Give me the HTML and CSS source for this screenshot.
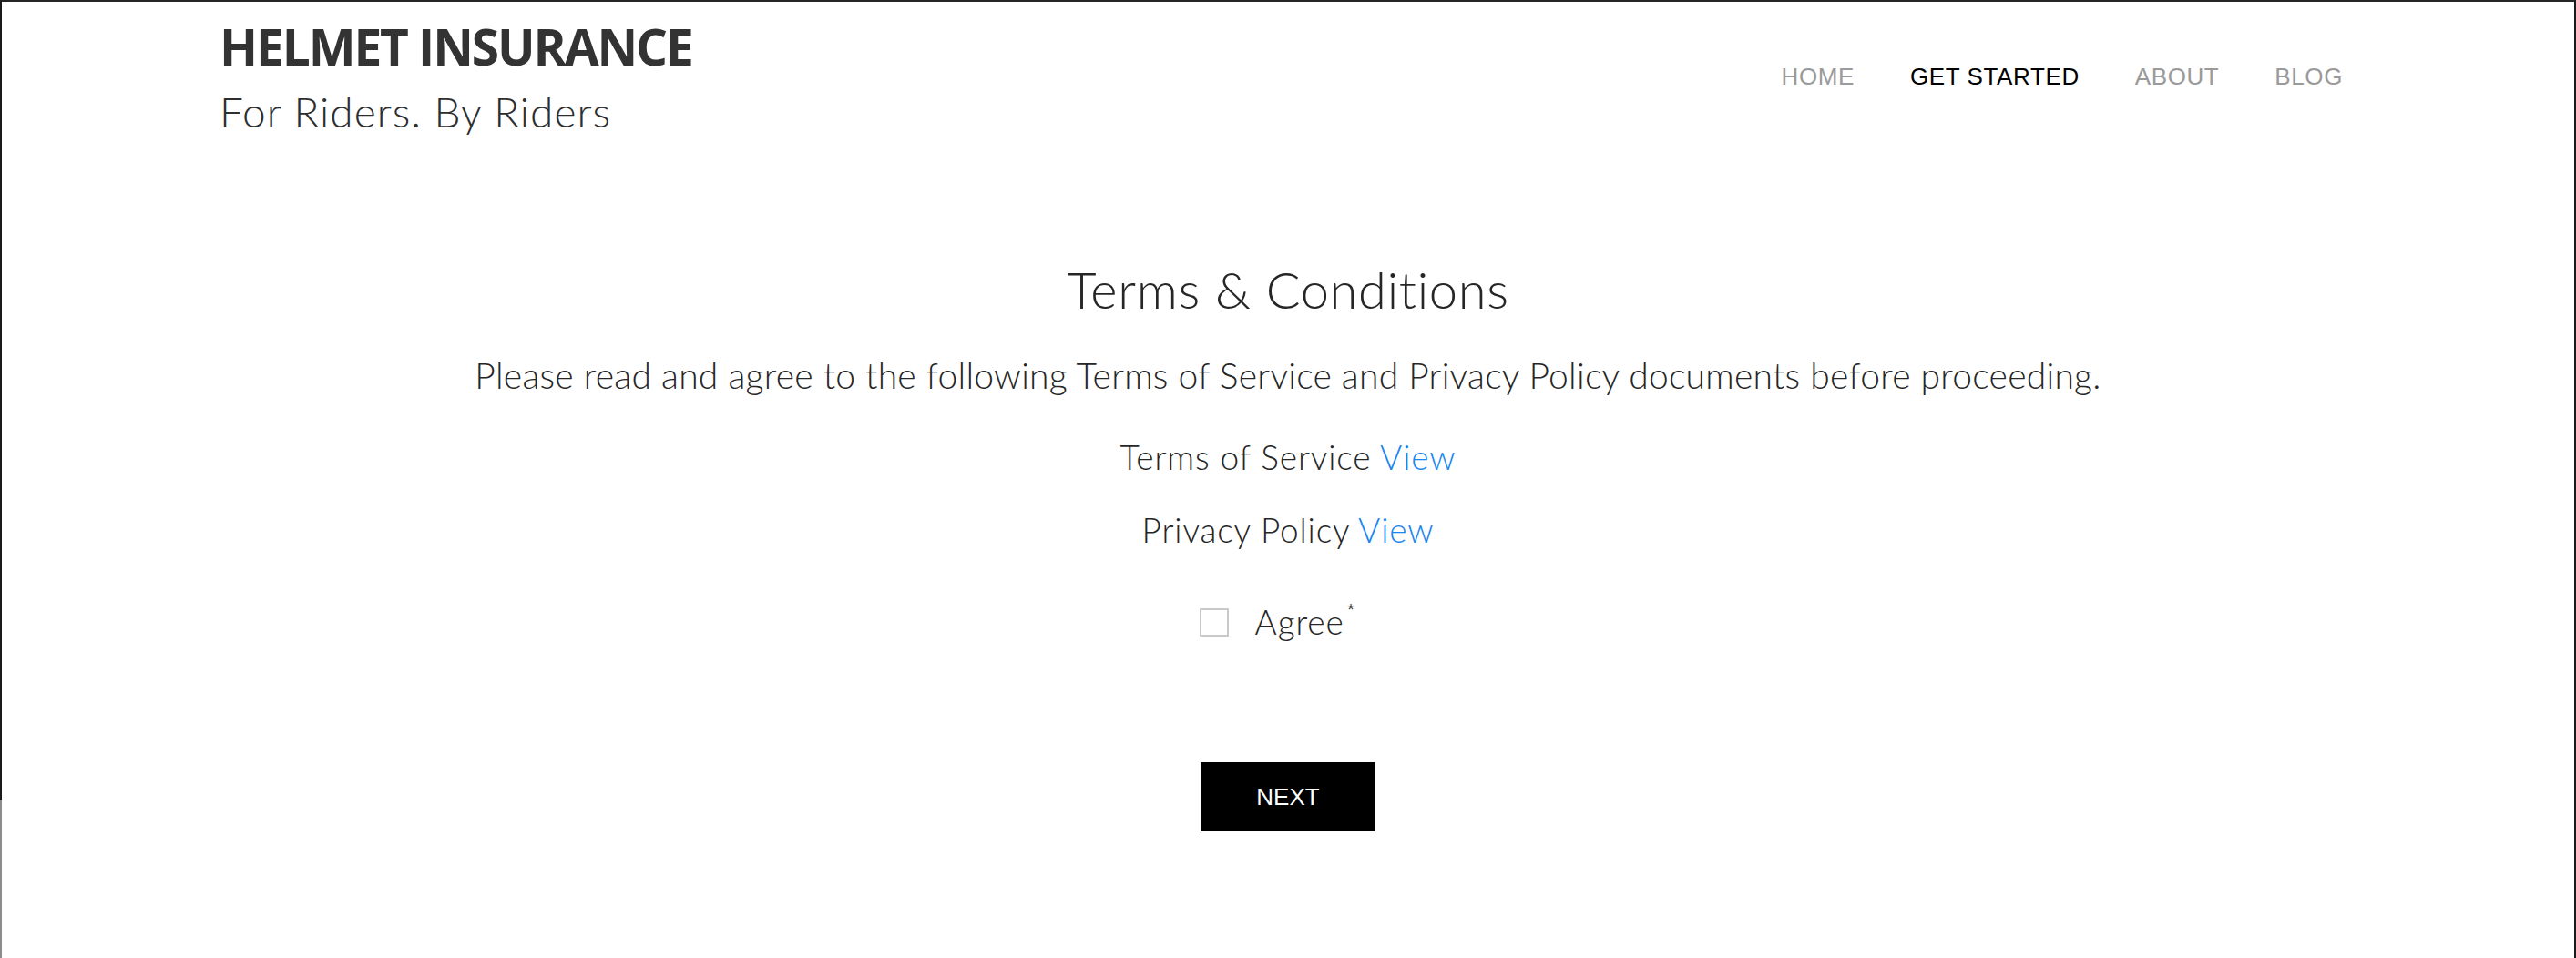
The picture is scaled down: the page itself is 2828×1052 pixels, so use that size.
FILE: index.html
```html
<!DOCTYPE html>
<html lang="en">
<head>
<meta charset="utf-8">
<title>Helmet Insurance - Terms &amp; Conditions</title>
<link rel="stylesheet" href="styles.css">
</head>
<body>
<div class="frame">
  <header class="site-header">
    <div class="brand">
      <div class="brand-name">HELMET INSURANCE</div>
      <div class="brand-tagline">For Riders. By Riders</div>
    </div>
    <nav class="main-nav">
      <a class="nav-link" href="#">HOME</a>
      <a class="nav-link active" href="#">GET STARTED</a>
      <a class="nav-link" href="#">ABOUT</a>
      <a class="nav-link" href="#">BLOG</a>
    </nav>
  </header>
  <main class="terms">
    <h1 class="terms-title">Terms &amp; Conditions</h1>
    <p class="terms-intro">Please read and agree to the following Terms of Service and Privacy Policy documents before proceeding.</p>
    <p class="doc-line">Terms of Service <a class="doc-link" href="#">View</a></p>
    <p class="doc-line">Privacy Policy <a class="doc-link" href="#">View</a></p>
    <label class="agree-row">
      <input class="agree-box" type="checkbox">
      <span class="agree-text">Agree<sup class="req">*</sup></span>
    </label>
    <button class="next-btn" type="button">NEXT</button>
  </main>
</div>
</body>
</html>
```
FILE: styles.css
```css
html, body {
  margin: 0;
  padding: 0;
  background: #ffffff;
}

.frame {
  position: relative;
  box-sizing: border-box;
  min-height: 100vh;
  border-top: 2px solid #262626;
  border-left: 2px solid #1a1a1a;
  border-right: 2px solid #1a1a1a;
  background: #ffffff;
}

.frame::before {
  content: "";
  position: absolute;
  left: -2px;
  top: 876px;
  bottom: 0;
  width: 2px;
  background: #8c8c8c;
}

.site-header {
  display: flex;
  justify-content: space-between;
  align-items: flex-start;
  padding: 19px 254px 0 239px;
}

.brand {
  display: flex;
  flex-direction: column;
}

.brand-name {
  font-family: "Open Sans", "Liberation Sans", sans-serif;
  font-weight: 700;
  font-size: 55px;
  line-height: 60px;
  letter-spacing: -2.1px;
  color: #333333;
}

.brand-tagline {
  margin-top: 15px;
  font-family: Lato, "Open Sans", sans-serif;
  font-weight: 300;
  font-size: 46px;
  line-height: 54px;
  letter-spacing: 1px;
  color: #2e2e2e;
}

.main-nav {
  display: flex;
  gap: 61px;
  margin-top: 47px;
}

.nav-link {
  font-family: "Liberation Sans", Arial, sans-serif;
  font-size: 26px;
  line-height: 32px;
  letter-spacing: 0.6px;
  color: #9a9a9a;
  text-decoration: none;
}

.nav-link.active {
  color: #000000;
}

.terms {
  display: flex;
  flex-direction: column;
  align-items: center;
  padding-top: 134px;
  font-family: Lato, "Open Sans", sans-serif;
  font-weight: 300;
  color: #262626;
}

.terms-title {
  margin: 0;
  font-weight: 300;
  font-size: 56px;
  line-height: 68px;
  letter-spacing: 0.7px;
}

.terms-intro {
  margin: 36px 0 0;
  font-size: 39px;
  line-height: 48px;
  letter-spacing: 0.25px;
}

.doc-line {
  margin: 44px 0 0;
  font-size: 37px;
  line-height: 44px;
  letter-spacing: 0.85px;
}

.doc-line + .doc-line {
  margin-top: 36px;
}

.doc-link {
  color: #1a86f0;
  text-decoration: none;
}

.agree-row {
  display: flex;
  align-items: center;
  gap: 29px;
  margin-top: 57px;
  padding-right: 24px;
}

.agree-box {
  appearance: none;
  -webkit-appearance: none;
  box-sizing: border-box;
  width: 32px;
  height: 31px;
  margin: 0;
  border: 2px solid #c9c9c9;
  background: #ffffff;
}

.agree-text {
  font-size: 37px;
  line-height: 44px;
  letter-spacing: 0.85px;
}

.req {
  font-family: "Liberation Sans", Arial, sans-serif;
  font-weight: 400;
  font-size: 18px;
  vertical-align: top;
  line-height: 18px;
  margin-left: 4px;
  color: #444444;
}

.next-btn {
  margin-top: 132px;
  width: 192px;
  height: 76px;
  border: none;
  border-radius: 0;
  background: #000000;
  color: #ffffff;
  font-family: "Liberation Sans", Arial, sans-serif;
  font-size: 26px;
  padding: 0;
  cursor: pointer;
}
```
